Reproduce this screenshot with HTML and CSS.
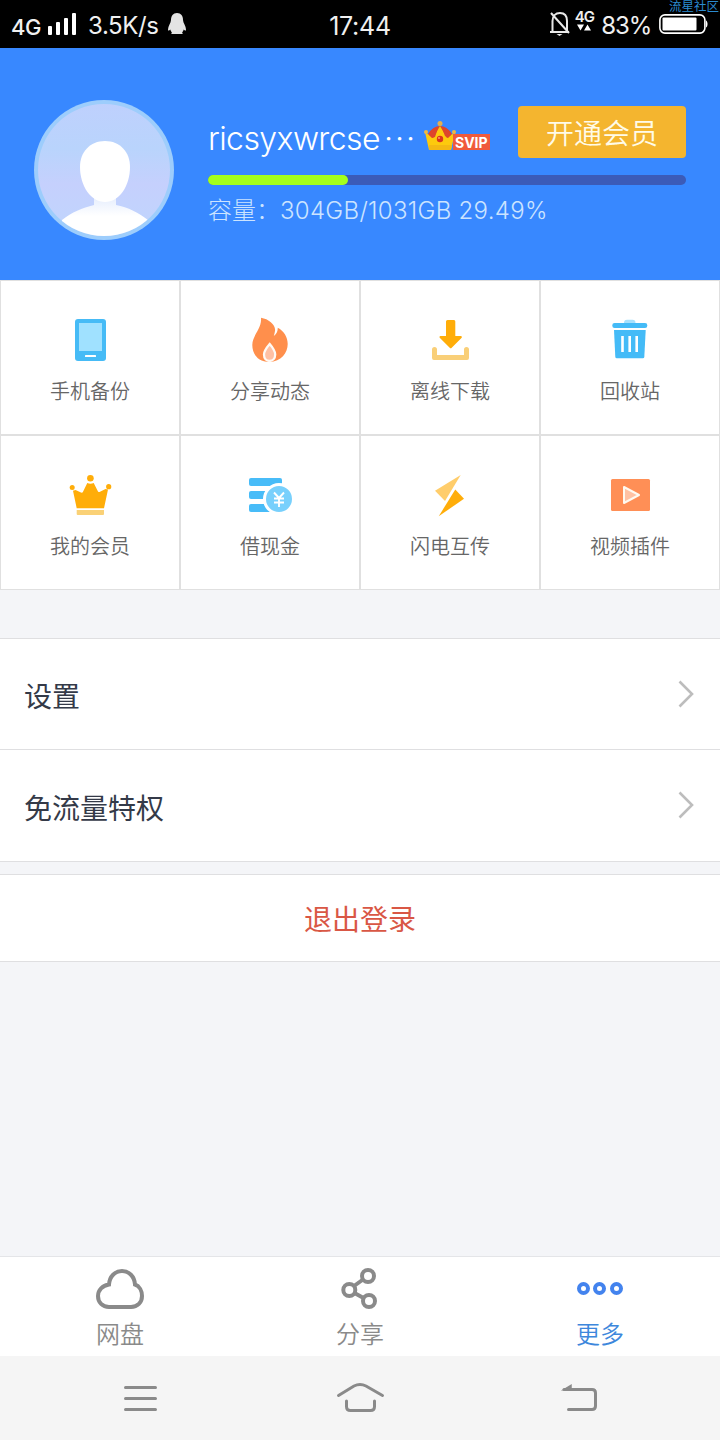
FILE: index.html
```html
<!DOCTYPE html>
<html lang="zh-CN">
<head>
<meta charset="utf-8">
<title>更多</title>
<link rel="stylesheet" href="styles.css">
</head>
<body>
<div class="screen">
  <div class="status">
    <div class="status-left">
      <span class="net">4G</span>
      <svg class="signal" width="28" height="22" viewBox="0 0 28 22" fill="#fff"><rect y="13" width="4" height="9" rx="1"/><rect x="8" y="9" width="4" height="13" rx="1"/><rect x="16" y="5" width="4" height="17" rx="1"/><rect x="24" width="4" height="22" rx="1"/></svg>
      <span class="speed">3.5K/s</span>
      <svg class="penguin" width="18" height="22" viewBox="0 0 18 22" fill="#e4e4e4"><path d="M9 0C5 0 3 3 3 7c0 3-3 6-3 9.500 0 1.500 1 1.500 2.300 0 .4 1.500 1 2.300 1.700 3-1 .5-1 1.500 0 1.500h10c1 0 1-1 0-1.500.7-.7 1.300-1.500 1.700-3 1.300 1.500 2.300 1.500 2.300 0C18 13 15 10 15 7c0-4-2-7-6-7z"/></svg>
    </div>
    <span class="clock">17:44</span>
    <div class="status-right">
      <svg class="bell" width="22" height="26" viewBox="0 0 22 26" fill="none" stroke="#e8e8e8" stroke-width="2"><path d="M3.500 20V10c0-5 3-8 7.500-8s7 3 7 8v10M1 21h19M2 2l18 20"/><path d="M7.500 23h6l-3 2z" fill="#e8e8e8" stroke="none"/></svg>
      <div class="data"><span class="data-net">4G</span><svg width="14" height="7" viewBox="0 0 14 7" fill="#fff"><path d="M0 .5h7L3.500 6.500zM7 6.500h7L10.500.5z"/></svg></div>
      <span class="percent">83%</span>
      <svg class="battery" width="49" height="20" viewBox="0 0 49 20"><rect x=".9" y=".9" width="45" height="18.200" rx="5" fill="none" stroke="#fff" stroke-width="1.600"/><rect x="3.500" y="3.500" width="34" height="13" rx="1" fill="#fff"/><path d="M47 6.500c2 1 2 6 0 7z" fill="#fff"/></svg>
    </div>
    <span class="watermark">流星社区</span>
  </div>

  <header class="profile">
    <svg class="avatar" width="140" height="140" viewBox="0 0 140 140">
      <defs><clipPath id="face"><circle cx="70" cy="70" r="66"/></clipPath><linearGradient id="sky" x2="0" y2="1"><stop offset="0" stop-color="#bfd0fd"/><stop offset=".35" stop-color="#b9d4fc"/><stop offset=".6" stop-color="#c5d0fd"/><stop offset="1" stop-color="#bfd6fd"/></linearGradient><linearGradient id="body" x2="0" y2="1"><stop offset="0" stop-color="#dfe9fd"/><stop offset=".5" stop-color="#fff"/></linearGradient></defs>
      <circle cx="70" cy="70" r="70" fill="#9dcdfc"/>
      <g clip-path="url(#face)"><rect width="140" height="140" fill="url(#sky)"/><path d="M60 92v13C48 108 38 112 28 120v20h86v-20c-9-7-20-13-32-15V92z" fill="url(#body)"/><path d="M71 41c15 0 25 11 25 26 0 19-11 35-25 35S46 86 46 67c0-15 10-26 25-26z" fill="#fff"/></g>
    </svg>
    <div class="info">
      <div class="name-row">
        <span class="name">ricsyxwrcse<span class="dots">···</span></span>
        <div class="badge">
          <svg width="32" height="30" viewBox="0 0 32 30"><path d="M4 13Q9 5 16 5t12 8l-3 8H7z" fill="#de452b"/><path d="M1 11l8 6 7-12 7 12 8-6-4 18H5z" fill="#fdca0d"/><path d="M5 14Q8 7 14 7l-3 9-3 1zM18 7q6 0 9 7l-3 3-3-2z" fill="#de452b"/><path d="M5 24h23l-1 5H5z" fill="#f4b913"/><circle cx="16" cy="2.500" r="2.500" fill="#e4ae4e"/><circle cx="2" cy="11" r="2" fill="#efb842"/><circle cx="30" cy="11" r="2" fill="#efb842"/><circle cx="16" cy="18" r="3.200" fill="#d9361e"/><circle cx="15" cy="17" r=".9" fill="#ffa36e"/></svg>
          <span class="svip">SVIP</span>
        </div>
        <span class="open">开通会员</span>
      </div>
      <div class="track"><div class="fill"></div></div>
      <div class="capacity"><span class="cap-label">容量：</span><span>304GB/1031GB 29.49%</span></div>
    </div>
  </header>

  <section class="grid">
    <div class="cell"><svg class="icon" viewBox="0 0 48 48"><rect x="9" y="3" width="31" height="42" rx="3" fill="#46bbf6"/><path d="M13 7h23v28H13z" fill="#a0e1ff"/><rect x="19" y="39" width="11" height="2" rx=".5" fill="#fff"/></svg><span>手机备份</span></div>
    <div class="cell"><svg class="icon" viewBox="0 0 48 48"><path d="M15 1.700C23 3 30 9 29 15c-.3 2-.8 3.500-1.200 5C30.500 18 32 15 31.700 11.700 38 15 41.700 21 41.700 28c0 9-6.500 17.500-18.400 18C12 46 6.300 38 6.300 29 6.300 19 16 13 15 1.700z" fill="#ff8f4c"/><path d="M23.700 28c3 3.500 5.500 6.700 5.500 10.500 0 4-2.500 6.500-5.700 6.500S18 42.500 18 38.500c0-3.800 2.700-7 5.700-10.500z" fill="#ffc0a3" stroke="#fffaf5" stroke-width="2.300"/></svg><span>分享动态</span></div>
    <div class="cell"><svg class="icon" viewBox="0 0 48 48"><path d="M21.500 4H28q1.300 0 1.300 1.500V20H35q1.500.5.7 1.800l-10 10q-1 1-2 0l-10-10Q12.800 20.500 14.300 20H20V5.500Q20 4 21.500 4z" fill="#ffad09"/><path d="M6 33.500a2.500 2.500 0 0 1 5 0V39h27v-5.500a2.500 2.500 0 0 1 5 0V42q0 2-2 2H8q-2 0-2-2z" fill="#f9cf78"/></svg><span>离线下载</span></div>
    <div class="cell"><svg class="icon" viewBox="0 0 48 48"><path d="M18 7q0-3.300 3-3.300h5.500q3 0 3 3.300z" fill="#a8e1fd"/><rect x="6.300" y="7" width="35" height="5" rx="2.300" fill="#44bbf7"/><path d="M8 14h31.700l-1.400 27q-.1 1.300-1.500 1.300h-26q-1.400 0-1.500-1.300z" fill="#44bbf7"/><path d="M16.500 20v16M23.700 20v16M30.700 20v16" stroke="#fff" stroke-width="2.600"/></svg><span>回收站</span></div>
    <div class="cell"><svg class="icon" viewBox="0 0 48 48"><g fill="#ffad09"><circle cx="24.400" cy="7.300" r="3.300"/><circle cx="6.200" cy="16.600" r="2.500"/><circle cx="42.700" cy="15.700" r="2.600"/><path d="M21.300 12q3 1.500 6.400 0l4.300 8.500q1 1 2 .2l5.500-2.700 2.500.5L38 37.300H10.700L7 19.700l2.500-.7 5.500 2.500q1.500.5 2-.8z"/></g><path d="M10.700 39H38v4q0 1-1 1H11.700q-1 0-1-1z" fill="#fad176"/></svg><span>我的会员</span></div>
    <div class="cell"><svg class="icon" viewBox="0 0 48 48"><g fill="#48bcf8"><rect x="3" y="7" width="33" height="8" rx="2"/><rect x="3" y="20" width="25" height="8" rx="2"/><rect x="3" y="33" width="25" height="8" rx="2"/></g><circle cx="33" cy="28" r="14.500" fill="#78d0fc" stroke="#fff" stroke-width="3"/><path d="M28 21.500l5 5.500 5-5.500M33 27v9M28 27.500h10M28 31.500h10" fill="none" stroke="#fff" stroke-width="1.900"/></svg><span>借现金</span></div>
    <div class="cell"><svg class="icon" viewBox="0 0 48 48"><path d="M34.700 4L19 30 9 19.700z" fill="#ffcd6b"/><path d="M29.300 18.500l8.700 9.200-25.300 17.600z" fill="#ffad09"/></svg><span>闪电互传</span></div>
    <div class="cell"><svg class="icon" viewBox="0 0 48 48"><rect x="5" y="8" width="39" height="32" rx="1.500" fill="#ff8f56"/><path d="M18 16v16l15-8z" fill="#ffc2a3" stroke="#fffaf0" stroke-width="2" stroke-linejoin="round"/></svg><span>视频插件</span></div>
  </section>

  <section class="list">
    <div class="row"><span>设置</span><svg class="arrow" width="16" height="28" viewBox="0 0 16 28"><path d="M1.500 1.500L14 14 1.500 26.500" fill="none" stroke="#bdbdbd" stroke-width="2.600"/></svg></div>
    <div class="row"><span>免流量特权</span><svg class="arrow" width="16" height="28" viewBox="0 0 16 28"><path d="M1.500 1.500L14 14 1.500 26.500" fill="none" stroke="#bdbdbd" stroke-width="2.600"/></svg></div>
  </section>
  <div class="logout">退出登录</div>

  <nav class="tabs">
    <div class="tab"><svg class="icon" viewBox="0 0 48 48" fill="none" stroke="#8a8a8a" stroke-width="4"><path d="M13 41C6.500 41 2 36.500 2 30c0-6 4.500-10.500 11-11.500C13.500 10.500 19 5 26 5s12.500 5.500 13 13.500c4.500 1.500 7 6.500 7 11.500 0 6.500-4.500 11-11 11z"/></svg><span>网盘</span></div>
    <div class="tab"><svg class="icon" viewBox="0 0 48 48" fill="none" stroke="#8a8a8a" stroke-width="4"><circle cx="13.300" cy="24" r="6"/><circle cx="32" cy="10" r="6"/><circle cx="33" cy="35" r="6"/><path d="M18 20l9-6.500M18.500 27l9 5"/></svg><span>分享</span></div>
    <div class="tab active"><svg class="icon" viewBox="0 0 48 48" fill="none" stroke="#4383ee" stroke-width="4"><circle cx="7.500" cy="22.500" r="4.500"/><circle cx="23.500" cy="22.500" r="4.500"/><circle cx="40.500" cy="22.500" r="4.500"/></svg><span>更多</span></div>
  </nav>
  <div class="system">
    <svg width="80" height="84" viewBox="0 0 80 84"><path d="M25.500 31.500h30M25.500 42.500h30M25.500 53.500h30"/></svg>
    <svg width="80" height="84" viewBox="0 0 80 84"><path d="M18.500 39.500L34 30q6-3 12 0l16.500 9.500M26.500 45v5.500q0 4 4 4h20q4 0 4-4V45"/></svg>
    <svg width="80" height="84" viewBox="0 0 80 84"><path d="M24 33.500h28q3.500 0 3.500 3.500v13q0 3.500-3.500 3.500H28.500"/><path d="M23.500 33.800l7.500-4.500v4.500z" fill="#8a8a8a" stroke-width="1.500"/></svg>
  </div>
</div>
</body>
</html>
```
FILE: styles.css
```css
* { box-sizing: border-box; }
body { margin: 0; font-family: Inter, "Noto Sans CJK SC", sans-serif; }
svg { display: block; flex: none; }
.screen { width: 720px; height: 1440px; display: flex; flex-direction: column; background: #f4f5f8; overflow: hidden; }

.status { position: relative; height: 48px; flex: none; background: #000; color: #f0f0f0; display: grid; grid-template-columns: 1fr auto 1fr; align-items: center; }
.status-left { display: flex; align-items: center; padding-left: 11px; white-space: nowrap; }
.net { font-size: 22px; font-weight: 500; width: 37px; padding-top: 5px; letter-spacing: -.5px; }
.speed { font-size: 24px; width: 81px; margin-left: 12px; padding-top: 2px; letter-spacing: -.4px; }
.penguin { margin-left: -1px; }
.clock { font-size: 25px; padding-top: 4px; letter-spacing: -.3px; }
.status-right { display: flex; align-items: center; justify-content: flex-end; padding-right: 12px; }
.bell { margin-right: 3px; }
.data { display: flex; flex-direction: column; align-items: center; width: 20px; margin: -8px 7px 0 0; }
.data-net { font-size: 15px; line-height: 15px; font-weight: 600; letter-spacing: -1px; }
.percent { font-size: 24px; padding-top: 2px; margin-right: 8px; letter-spacing: -1.2px; }
.watermark { position: absolute; right: 1px; top: 0; font-size: 12.500px; line-height: 13px; color: #2b8bd0; white-space: nowrap; }

.profile { height: 232px; flex: none; background: #3888ff; display: flex; padding: 52px 34px 0; gap: 34px; }
.info { flex: 1; padding-top: 6px; }
.name-row { display: flex; height: 52px; }
.name { color: #fff; font-size: 32px; font-weight: 300; line-height: 66px; width: 216px; white-space: nowrap; letter-spacing: -.6px; }
.dots { letter-spacing: 2px; margin-left: 4px; }
.badge { display: flex; padding-top: 15px; }
.svip { background: #f05a3b; color: #fff; font-size: 14px; font-weight: 700; line-height: 17px; height: 16px; width: 37px; margin: 13px 0 0 -3px; padding-left: 2px; }
.open { margin-left: auto; width: 168px; height: 52px; border-radius: 4px; background: #f4b52f; color: #fffbe8; font-size: 28px; font-weight: 350; line-height: 56px; text-align: center; }
.track { height: 10px; margin-top: 17px; border-radius: 5px; background: #3b5bb8; }
.fill { height: 10px; width: 140px; border-radius: 5px; background: #a3ff1c; }
.capacity { display: flex; margin-top: 9px; font-size: 24px; font-weight: 300; line-height: 34px; color: #cce4ff; white-space: nowrap; letter-spacing: .3px; }
.cap-label { width: 72px; letter-spacing: 0; }

.grid { height: 310px; flex: none; display: grid; grid-template-columns: repeat(4, 1fr); grid-template-rows: 155px 155px; background: #fff; }
.cell { border: 1px solid #e0e0e0; display: flex; flex-direction: column; align-items: center; padding-top: 35px; color: #666; font-size: 20px; line-height: 28px; }
.cell span { margin-top: 14px; font-weight: 350; }
.icon { width: 48px; height: 48px; }

.list { margin-top: 48px; background: #fff; border-top: 1px solid #dfdfe1; }
.row { height: 111px; border-bottom: 1px solid #dfdfe1; padding: 2px 26px 0 24px; display: flex; align-items: center; justify-content: space-between; color: #343a48; font-size: 28px; }
.row + .row { height: 112px; }
.arrow { margin-top: -3px; }
.logout { margin-top: 12px; height: 88px; background: #fff; border: solid #dfdfe1; border-width: 1px 0; color: #d95745; font-size: 28px; line-height: 90px; text-align: center; }

.tabs { margin-top: auto; height: 100px; flex: none; background: #fff; border-top: 1px solid #e4e5e8; display: grid; grid-template-columns: repeat(3, 1fr); }
.tab { display: flex; flex-direction: column; align-items: center; padding-top: 9px; color: #8a8a8a; font-size: 24px; font-weight: 350; line-height: 36px; }
.tab span { margin-top: 3px; }
.active { color: #3d87dc; }
.system { height: 84px; flex: none; background: #f5f5f5; display: flex; justify-content: space-between; padding: 0 100px; fill: none; stroke: #8a8a8a; stroke-width: 3; stroke-linecap: round; }
```
